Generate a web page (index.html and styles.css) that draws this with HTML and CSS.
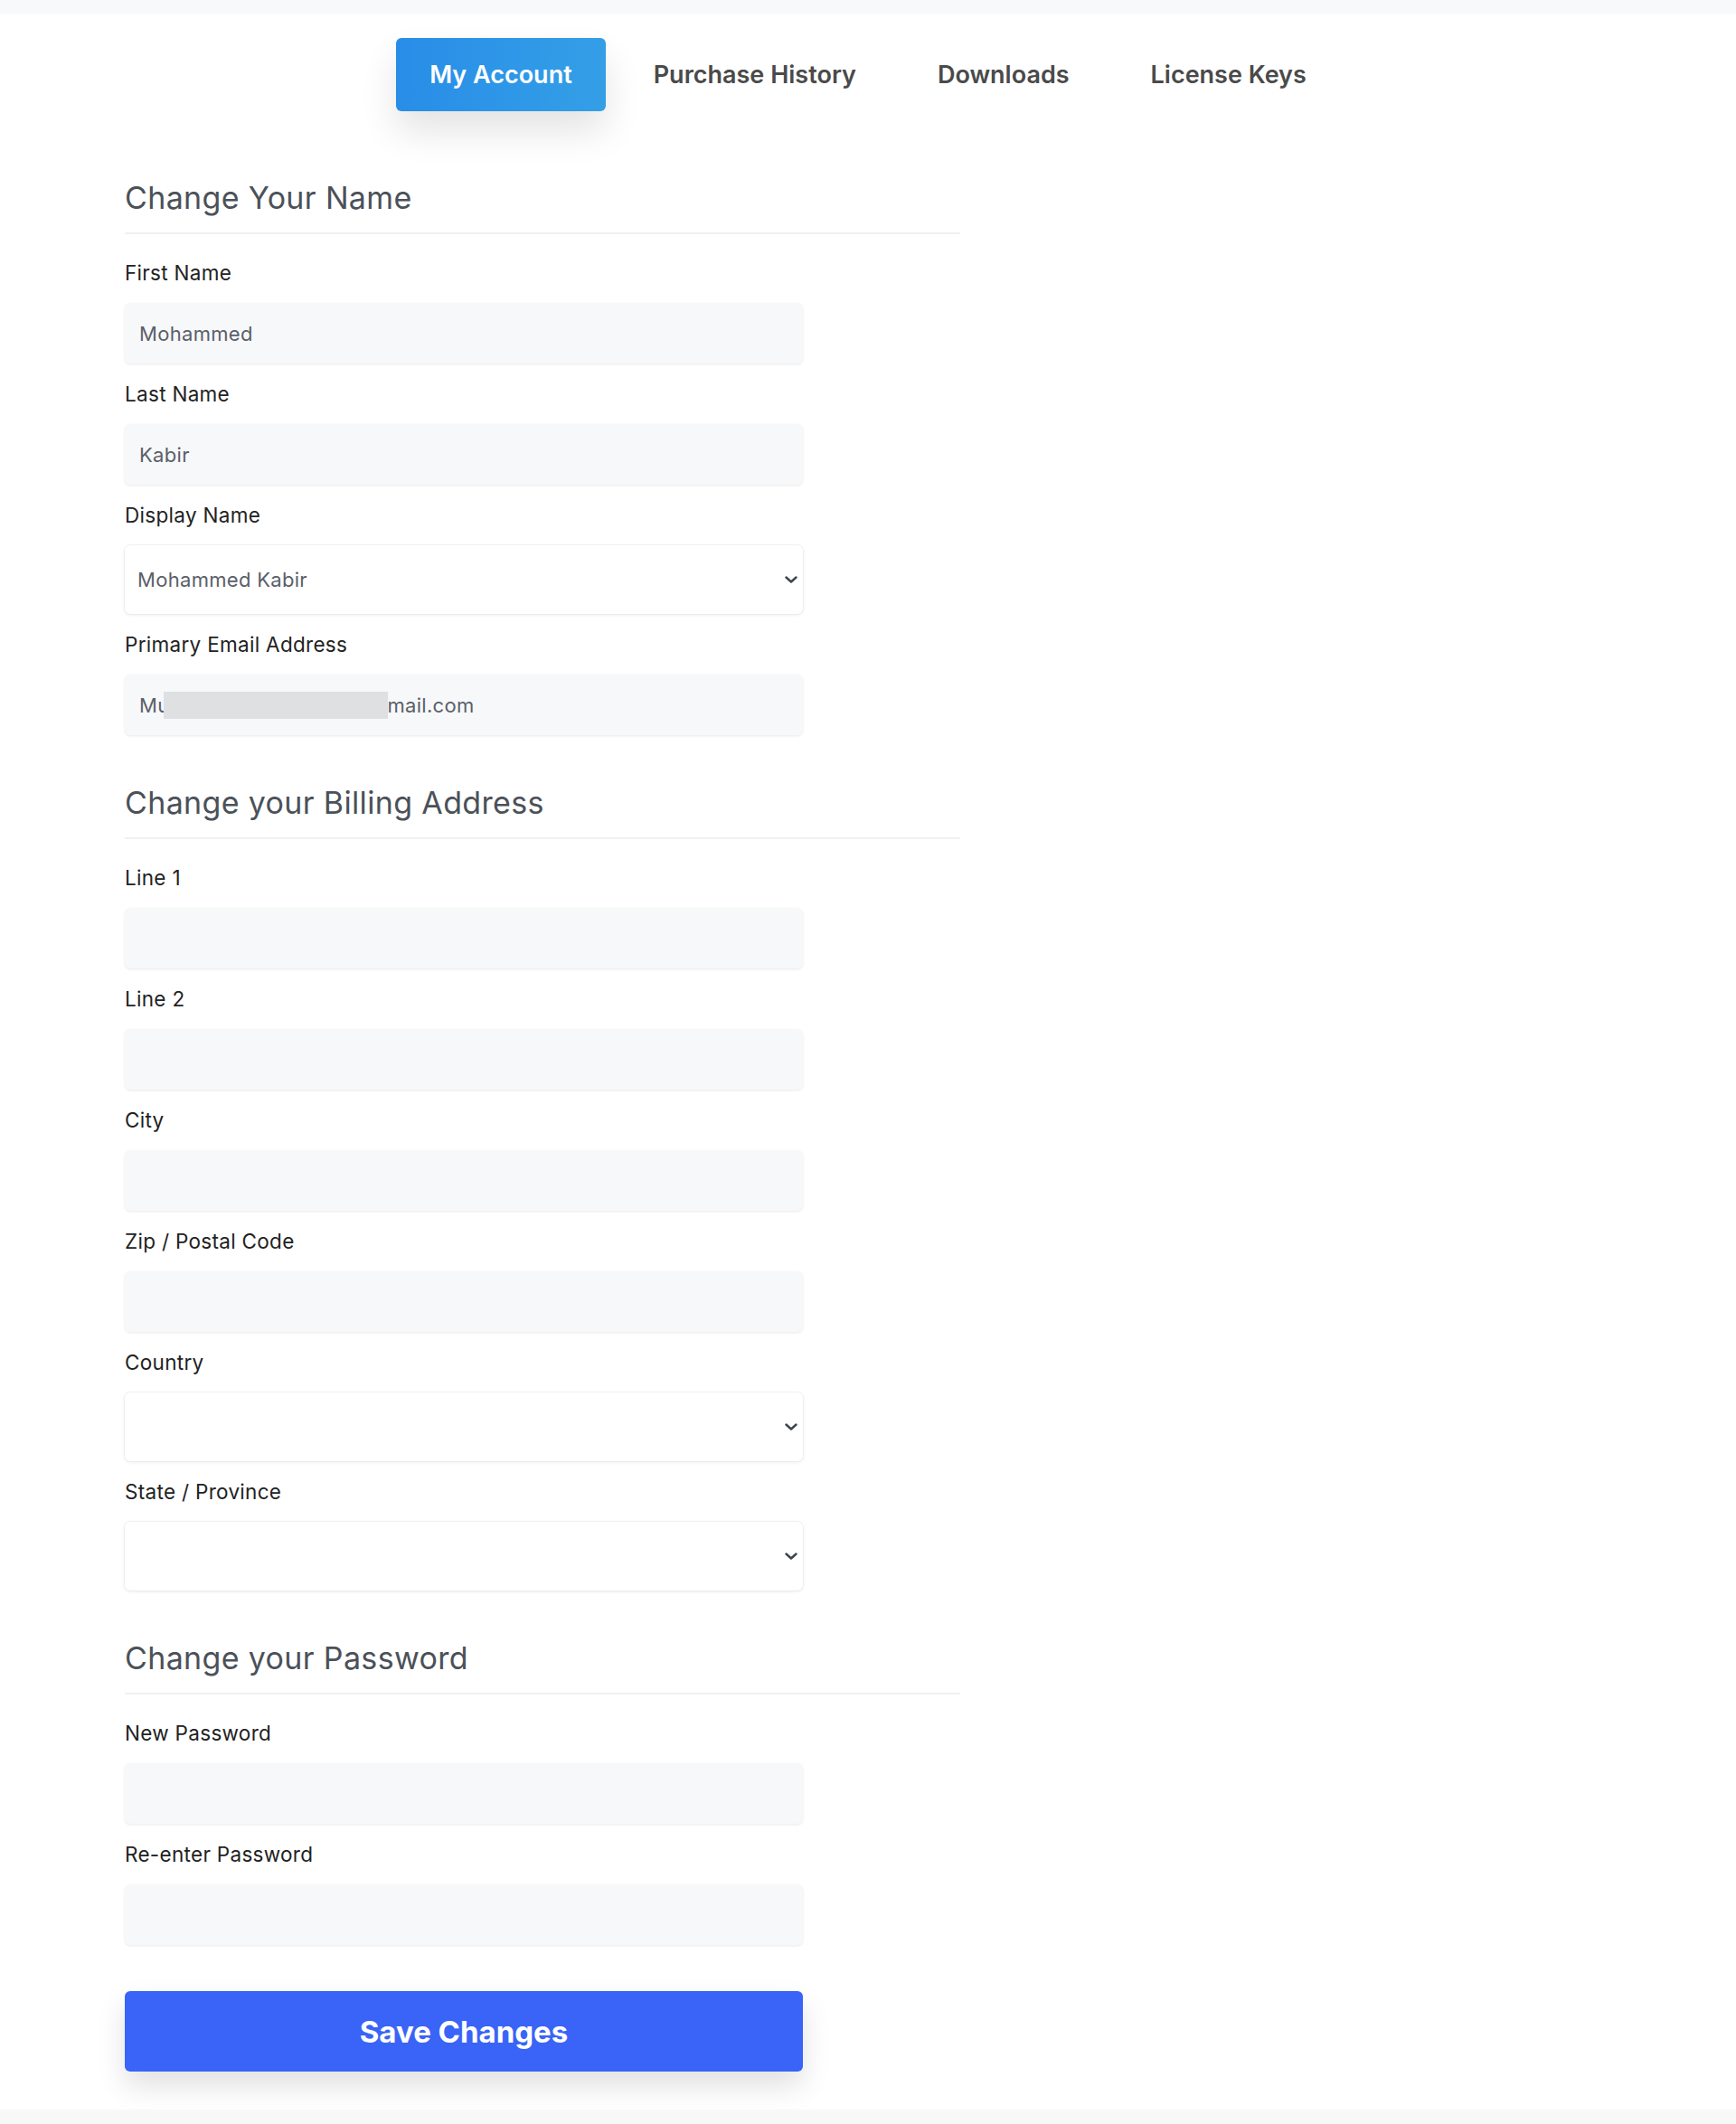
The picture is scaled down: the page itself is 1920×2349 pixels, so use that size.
FILE: index.html
```html
<!DOCTYPE html>
<html lang="en">
<head>
<meta charset="utf-8">
<title>My Account</title>
<link rel="stylesheet" href="styles.css">
</head>
<body>
<div class="topbar"></div>
<nav class="tabs">
  <a class="tab active" href="#">My Account</a>
  <a class="tab" href="#">Purchase History</a>
  <a class="tab" href="#">Downloads</a>
  <a class="tab" href="#">License Keys</a>
</nav>
<main class="content">
  <section class="section first">
    <h2 class="section-title">Change Your Name</h2>
    <div class="fields">
      <div class="field">
        <label class="label">First Name</label>
        <input class="input" type="text" value="Mohammed">
      </div>
      <div class="field">
        <label class="label">Last Name</label>
        <input class="input" type="text" value="Kabir">
      </div>
      <div class="field">
        <label class="label">Display Name</label>
        <div class="select-wrap">
          <select class="select"><option>Mohammed Kabir</option></select>
          <svg class="chevron" viewBox="0 0 14 8" width="14" height="8"><path d="M1.5 1.5 L7 6.5 L12.5 1.5" fill="none" stroke="#3f444b" stroke-width="2.4" stroke-linecap="round" stroke-linejoin="round"/></svg>
        </div>
      </div>
      <div class="field">
        <label class="label">Primary Email Address</label>
        <div class="input input-static">Mu<span class="redact"></span>mail.com</div>
      </div>
    </div>
  </section>

  <section class="section">
    <h2 class="section-title">Change your Billing Address</h2>
    <div class="fields">
      <div class="field">
        <label class="label">Line 1</label>
        <input class="input" type="text">
      </div>
      <div class="field">
        <label class="label">Line 2</label>
        <input class="input" type="text">
      </div>
      <div class="field">
        <label class="label">City</label>
        <input class="input" type="text">
      </div>
      <div class="field">
        <label class="label">Zip / Postal Code</label>
        <input class="input" type="text">
      </div>
      <div class="field">
        <label class="label">Country</label>
        <div class="select-wrap">
          <select class="select"><option></option></select>
          <svg class="chevron" viewBox="0 0 14 8" width="14" height="8"><path d="M1.5 1.5 L7 6.5 L12.5 1.5" fill="none" stroke="#3f444b" stroke-width="2.4" stroke-linecap="round" stroke-linejoin="round"/></svg>
        </div>
      </div>
      <div class="field">
        <label class="label">State / Province</label>
        <div class="select-wrap">
          <select class="select"><option></option></select>
          <svg class="chevron" viewBox="0 0 14 8" width="14" height="8"><path d="M1.5 1.5 L7 6.5 L12.5 1.5" fill="none" stroke="#3f444b" stroke-width="2.4" stroke-linecap="round" stroke-linejoin="round"/></svg>
        </div>
      </div>
    </div>
  </section>

  <section class="section">
    <h2 class="section-title">Change your Password</h2>
    <div class="fields">
      <div class="field">
        <label class="label">New Password</label>
        <input class="input" type="password">
      </div>
      <div class="field">
        <label class="label">Re-enter Password</label>
        <input class="input" type="password">
      </div>
    </div>
  </section>

  <button class="save" type="button">Save Changes</button>
</main>
<footer class="footer"></footer>
</body>
</html>
```

FILE: styles.css
```css
* { box-sizing: border-box; }

html, body {
  margin: 0;
  padding: 0;
  background: #ffffff;
  font-family: Inter, "Noto Sans", "Liberation Sans", sans-serif;
}

.topbar {
  height: 15px;
  background: #f8f9fa;
}

.tabs {
  display: flex;
  justify-content: center;
  gap: 16px;
  margin-top: 27px;
}

.tab {
  display: flex;
  align-items: center;
  height: 81px;
  padding: 0 37px;
  font-size: 27px;
  font-weight: 600;
  color: #4a4a4a;
  text-decoration: none;
  border-radius: 6px;
}

.tab.active {
  background: linear-gradient(90deg, #288de7 0%, #349fe7 100%);
  color: #ffffff;
  box-shadow: 0 22px 40px rgba(0, 0, 0, 0.11);
}

.content {
  padding-left: 138px;
}

.section {
  width: 924px;
  margin-top: 54px;
}

.section.first {
  margin-top: 75px;
}

.section-title {
  margin: 0;
  font-size: 34px;
  line-height: 41px;
  font-weight: 400;
  letter-spacing: 0.35px;
  color: #4b5159;
  padding-bottom: 18px;
  border-bottom: 2px solid #eff0f2;
}

.fields {
  display: flex;
  flex-direction: column;
  gap: 18px;
  margin-top: 27px;
  width: 750px;
}

.field {
  display: flex;
  flex-direction: column;
}

.label {
  font-size: 22.5px;
  line-height: 32px;
  letter-spacing: 0.3px;
  color: #222222;
  margin-bottom: 17px;
}

.input {
  width: 750px;
  height: 67px;
  border: none;
  outline: none;
  border-radius: 6px;
  background: #f7f8fa;
  box-shadow: 0 1px 3px rgba(0, 0, 0, 0.09);
  padding: 0 16px;
  font-family: inherit;
  font-size: 22px;
  letter-spacing: 0.3px;
  color: #5a6068;
}

.input-static {
  display: flex;
  align-items: center;
  white-space: nowrap;
}

.redact {
  display: inline-block;
  width: 248px;
  height: 30px;
  margin-left: -6px;
  margin-right: -1px;
  background: #dfe0e2;
}

.select-wrap {
  position: relative;
  width: 750px;
}

.select {
  width: 750px;
  height: 76px;
  border: none;
  outline: none;
  border-radius: 6px;
  background: #ffffff;
  box-shadow: 0 0 0 1px rgba(0, 0, 0, 0.035), 0 1px 4px rgba(0, 0, 0, 0.08);
  padding: 0 14px;
  font-family: inherit;
  font-size: 22px;
  letter-spacing: 0.3px;
  color: #5a6068;
  -webkit-appearance: none;
  appearance: none;
}

.chevron {
  position: absolute;
  right: 6px;
  top: 50%;
  margin-top: -4px;
  pointer-events: none;
}

.save {
  display: block;
  width: 750px;
  height: 89px;
  margin-top: 51px;
  border: none;
  border-radius: 6px;
  background: #3a63f7;
  color: #ffffff;
  font-family: inherit;
  font-size: 33px;
  font-weight: 700;
  box-shadow: 0 16px 32px rgba(0, 0, 0, 0.12);
  cursor: pointer;
}

.footer {
  margin-top: 42px;
  height: 17px;
  background: #f8f8f8;
}
```
